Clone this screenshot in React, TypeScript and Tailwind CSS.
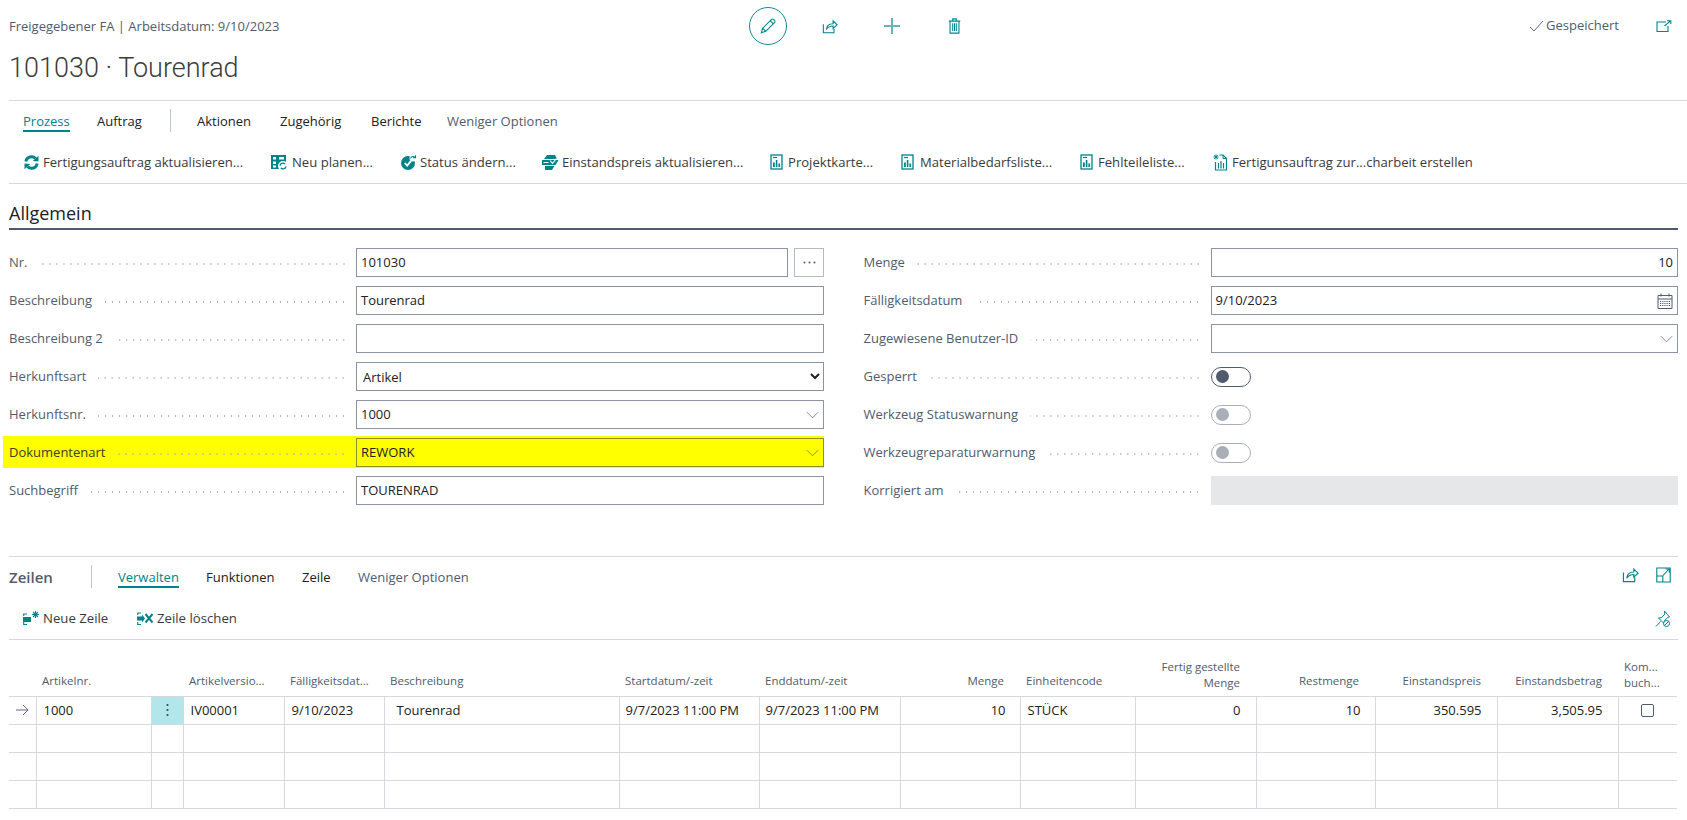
import React from 'react';

const TEAL = '#00838a';

const Refresh = () => (
  <svg width="15" height="15" viewBox="0 0 15 15" fill="none">
    <path d="M1.800 6.500C2.400 3.500 4.700 1.700 7.500 1.700c1.700 0 3 .6 4 1.700" stroke={TEAL} strokeWidth="3" />
    <path d="M8.800 6 14.500 6.600V.8z" fill={TEAL} />
    <path d="M13.200 8.500c-.6 3-2.900 4.800-5.700 4.800-1.700 0-3-.6-4-1.700" stroke={TEAL} strokeWidth="3" />
    <path d="M6.200 9 .5 8.400v5.800z" fill={TEAL} />
  </svg>
);

const Replan = () => (
  <svg width="17" height="15" viewBox="0 0 17 15">
    <rect x="0" y="0" width="15" height="14" fill={TEAL} />
    <path d="M2 2h3v2.500H2zM8 2h5v2.500H8zM2 6.500h3V9H2zM2 10.500h3V12.500H2z" fill="#fff" />
    <circle cx="12" cy="11" r="5" fill="#fff" />
    <path d="M9 10.500a3 3 0 0 1 5.200-1.400M15 11.500a3 3 0 0 1-5.200 1.400" stroke={TEAL} strokeWidth="1.300" fill="none" />
  </svg>
);

const StatusIcon = () => (
  <svg width="16" height="15" viewBox="0 0 16 15">
    <circle cx="7" cy="8" r="7" fill={TEAL} />
    <path d="M3.800 8l2.400 2.600 4-5" stroke="#fff" strokeWidth="1.800" fill="none" />
    <circle cx="12" cy="3" r="3.500" fill="#fff" />
    <path d="M9.500 3.400C10 1.600 12 1 14 2.200M14.500.3v2.400h-2.400" stroke={TEAL} strokeWidth="1.100" fill="none" />
  </svg>
);

const PriceIcon = () => (
  <svg width="17" height="15" viewBox="0 0 17 15">
    <path d="M5 0h8l2 4H2z" fill={TEAL} />
    <path d="M0 5h16.500l-3 5H0z" fill={TEAL} />
    <path d="M3 11h9.500l-2.500 4H3z" fill={TEAL} />
    <path d="M1.500 7.500h5M8 5.500l2.500 2.800 4-4.800" stroke="#fff" strokeWidth="1.100" fill="none" />
  </svg>
);

const ReportIcon = () => (
  <svg width="13" height="16" viewBox="0 0 13 16" fill="none">
    <rect x="1" y="1" width="11" height="14" stroke={TEAL} strokeWidth="1.300" />
    <path d="M3 3.500h4" stroke={TEAL} strokeWidth="1.200" />
    <path d="M3 13V8.500h1.800V13zM5.800 13V6h1.600v7zM8.400 13V9.500h1.700V13z" fill={TEAL} />
  </svg>
);

const NewDocIcon = () => (
  <svg width="15" height="17" viewBox="0 0 15 17" fill="none">
    <path d="M6.500 1H10l3.500 3.500V16H2.500V8" stroke={TEAL} strokeWidth="1.200" />
    <path d="M10 1v3.500h3.500" stroke={TEAL} strokeWidth="1" />
    <path d="M5.500 9v5.500M8 7v7.500M10.500 9v5.500" stroke={TEAL} strokeWidth="1.200" />
    <path d="M3 .5v5M.5 3h5M1.200 1.200l3.600 3.600M4.800 1.200 1.200 4.800" stroke={TEAL} strokeWidth="1" />
  </svg>
);

const ShareIcon = ({ size = 16 }: { size?: number }) => (
  <svg width={size} height={size} viewBox="0 0 18 18" fill="none" stroke={TEAL} strokeWidth="1.200">
    <path d="M1.500 7v9.500h12V12" />
    <path d="M5 13c.3-4 3-6.600 7.500-6.600V3.200L17 7.600l-4.500 4.300V9C9 9 6.500 10.500 5 13z" />
  </svg>
);

const PencilIcon = () => (
  <svg width="16" height="16" viewBox="0 0 18 18" fill="none" stroke={TEAL} strokeWidth="1.200">
    <path d="M1.500 16.500 3 11.500 12.800 1.700c.7-.7 1.700-.7 2.400 0l1.100 1.100c.7.7.7 1.700 0 2.400L6.500 15z" />
    <path d="M3 11.500 6.500 15M11.500 3l3.500 3.500" />
  </svg>
);

const TrashIcon = () => (
  <svg width="13" height="16" viewBox="0 0 14 18" fill="none" stroke={TEAL} strokeWidth="1.200">
    <path d="M.5 3.500h13M5 3.500V1h4v2.500M2 3.500V17h10V3.500" />
    <path d="M5 6v8.500M7 6v8.500M9 6v8.500" />
  </svg>
);

const OpenIcon = () => (
  <svg width="16" height="12" viewBox="0 0 16 12" fill="none" stroke={TEAL} strokeWidth="1.100">
    <path d="M10 2H1v9.500h11V6" />
    <path d="M8.500 6 14.500.8M11 .8h3.800V4" />
  </svg>
);

const ExpandIcon = () => (
  <svg width="15" height="16" viewBox="0 0 15 16" fill="none" stroke={TEAL} strokeWidth="1.100">
    <path d="M.8 1h13.400v14H.8z" />
    <path d="M.8 9h6v6M7 8.500l6-6.500M9.500 2h3.800v3.800" />
  </svg>
);

const PinIcon = () => (
  <svg width="16" height="18" viewBox="0 0 16 18" fill="none" stroke={TEAL} strokeWidth="1">
    <path d="M9.500 1 14.500 7l-1.800.4-3.200 3.300-.3 3L3.500 8l3-.4 3.300-3.400z" />
    <path d="M5.500 11.500 1 16.500" />
    <circle cx="11.500" cy="13.500" r="3" fill="#fff" />
    <path d="m9.500 15.500 4-4" />
  </svg>
);

const NewLineIcon = () => (
  <svg width="17" height="15" viewBox="0 0 17 15" fill="none">
    <path d="M4 3H.7v2M.7 11v2.500H4" stroke={TEAL} strokeWidth="1.100" />
    <rect x="0" y="6" width="8" height="5" fill={TEAL} />
    <path d="M12.500 0v7M9 3.500h7M10 1l5 5M15 1l-5 5" stroke={TEAL} strokeWidth="1.100" />
  </svg>
);

const DeleteLineIcon = () => (
  <svg width="17" height="15" viewBox="0 0 17 15" fill="none">
    <path d="M4 2H.7v2M.7 11v2.500H4" stroke={TEAL} strokeWidth="1.100" />
    <path d="M0 5.500h5V3.500l3 4-3 4v-2H0z" fill={TEAL} />
    <path d="m8.500 3 7 8.500M15.500 3l-7 8.500" stroke={TEAL} strokeWidth="2" />
  </svg>
);

const Chevron = () => (
  <svg width="13" height="8" viewBox="0 0 14 8" fill="none" stroke="#6b7686" strokeWidth="0.9">
    <path d="M1 1l6 6 6-6" />
  </svg>
);

const CalendarIcon = () => (
  <svg width="16" height="16" viewBox="0 0 16 16" fill="none" stroke="#505c6d" strokeWidth="1">
    <path d="M1 2.500h14v13H1zM1 6h14M4 .5v3M12 .5v3" />
    <path d="M3 8.500h10M3 10.500h10M3 12.500h10" strokeDasharray="1.200 1" />
  </svg>
);

const topTabs = [
  { label: 'Prozess', w: 'w-[74px]', active: true },
  { label: 'Auftrag', w: 'w-[73px]' },
];
const moreTabs = [
  { label: 'Aktionen', w: 'w-[83px]' },
  { label: 'Zugehörig', w: 'w-[91px]' },
  { label: 'Berichte', w: 'w-[76px]' },
  { label: 'Weniger Optionen', w: 'w-[120px]', muted: true },
];

const Tab = ({ label, w, active, muted }: { label: string; w: string; active?: boolean; muted?: boolean }) => (
  <div className={`${w} flex shrink-0 items-start pt-[12px]`}>
    <span
      className={`whitespace-nowrap text-[13px] leading-[17px] border-b-2 ${
        active ? 'text-[#00838a] border-[#00838a]' : muted ? 'text-[#505c6d] border-transparent' : 'text-[#212121] border-transparent'
      }`}
    >
      {label}
    </span>
  </div>
);

const actions = [
  { label: 'Fertigungsauftrag aktualisieren...', w: 'w-[247px]', box: 'w-[19px]', icon: <Refresh /> },
  { label: 'Neu planen...', w: 'w-[130px]', box: 'w-[21px]', icon: <Replan /> },
  { label: 'Status ändern...', w: 'w-[141px]', box: 'w-[19px]', icon: <StatusIcon /> },
  { label: 'Einstandspreis aktualisieren...', w: 'w-[228px]', box: 'w-[20px]', icon: <PriceIcon /> },
  { label: 'Projektkarte...', w: 'w-[131px]', box: 'w-[18px]', icon: <ReportIcon /> },
  { label: 'Materialbedarfsliste...', w: 'w-[179px]', box: 'w-[19px]', icon: <ReportIcon /> },
  { label: 'Fehlteileliste...', w: 'w-[133px]', box: 'w-[18px]', icon: <ReportIcon /> },
  { label: 'Fertigunsauftrag zur...charbeit erstellen', w: 'w-[260px]', box: 'w-[19px]', icon: <NewDocIcon /> },
];

const Leader = () => (
  <div className="h-[2px] flex-1 ml-[12px] mt-[2px] bg-[radial-gradient(circle,#adb2bb_0.7px,transparent_0.9px)] bg-[length:7px_2px] bg-repeat-x bg-right" />
);

const Field = ({ label, children, highlight }: { label: string; children: React.ReactNode; highlight?: boolean }) => (
  <div
    className={`flex items-center ${
      highlight ? 'bg-[#ffff00] ml-[-6px] pl-[6px] mt-[-2px] mb-[-1px] pt-[2px] pb-[1px]' : ''
    }`}
  >
    <div className="flex w-[338px] shrink-0 items-center mr-[9px]">
      <span className={`text-[13px] whitespace-nowrap ${highlight ? 'text-[#3c3c28]' : 'text-[#505c6d]'}`}>{label}</span>
      <Leader />
    </div>
    <div className="flex-1 min-w-0">{children}</div>
  </div>
);

const Box = ({
  children,
  right,
  highlight,
  className = '',
}: {
  children?: React.ReactNode;
  right?: boolean;
  highlight?: boolean;
  className?: string;
}) => (
  <div
    className={`flex h-[29px] items-center border px-[4px] text-[13px] text-[#212121] ${
      highlight ? 'border-[#8f8f2a]' : 'border-[#8a94a4] bg-white'
    } ${right ? 'justify-end' : 'justify-between'} ${className}`}
  >
    {children}
  </div>
);

const Toggle = ({ disabled }: { disabled?: boolean }) => (
  <div
    className={`flex h-[20px] w-[40px] items-center rounded-[10px] border pl-[4px] ${
      disabled ? 'border-[#a9aeb8]' : 'border-[#505c6d]'
    }`}
  >
    <div className={`h-[13px] w-[13px] rounded-full ${disabled ? 'bg-[#a9aeb8]' : 'bg-[#505c6d]'}`} />
  </div>
);

const columns = [
  { label: '', w: 'w-[27px]' },
  { label: 'Artikelnr.', w: 'w-[115px]' },
  { label: '', w: 'w-[32px]' },
  { label: 'Artikelversio...', w: 'w-[101px]' },
  { label: 'Fälligkeitsdat...', w: 'w-[100px]' },
  { label: 'Beschreibung', w: 'w-[235px]' },
  { label: 'Startdatum/-zeit', w: 'w-[140px]' },
  { label: 'Enddatum/-zeit', w: 'w-[141px]' },
  { label: 'Menge', w: 'w-[120px]', right: true },
  { label: 'Einheitencode', w: 'w-[115px]' },
  { label: 'Fertig gestellte', label2: 'Menge', w: 'w-[121px]', right: true },
  { label: 'Restmenge', w: 'w-[119px]', right: true },
  { label: 'Einstandspreis', w: 'w-[122px]', right: true },
  { label: 'Einstandsbetrag', w: 'w-[121px]', right: true },
  { label: 'Kom...', label2: 'buch...', w: 'w-[59px]' },
];

const rowCell = 'h-[28px] border-b border-l first:border-l-0 border-[#d5d8dd] p-0 text-[13px] text-[#212121] whitespace-nowrap';
const textCell = `${rowCell} pt-[2px]`;

export default function App() {
  return (
    <div className="h-[820px] w-full overflow-hidden bg-white font-['Open_Sans',sans-serif]">
      {/* page header */}
      <div className="flex h-[100px] pl-[9px]">
        <div className="w-[740px] shrink-0">
          <div className="pt-[17px] text-[13px] leading-[18px] text-[#505c6d]">Freigegebener FA | Arbeitsdatum: 9/10/2023</div>
          <div className="pt-[15px] font-['Roboto',sans-serif] text-[27px] font-light leading-[36px] text-[#3c3c3c]">101030 · Tourenrad</div>
        </div>
        <div className="flex h-[38px] mt-[7px] items-center">
          <div className="flex h-[38px] w-[38px] items-center justify-center rounded-full border border-[#108a94]">
            <PencilIcon />
          </div>
          <div className="ml-[12px] flex w-[62px] justify-center"><ShareIcon /></div>
          <div className="flex w-[62px] justify-center">
            <svg width="16" height="16" viewBox="0 0 16 16" stroke="#66b4b8" strokeWidth="2"><path d="M8 0v16M0 8h16" /></svg>
          </div>
          <div className="flex w-[62px] justify-center"><TrashIcon /></div>
        </div>
        <div className="ml-auto flex h-[52px] items-center pr-[15px]">
          <svg width="16" height="12" viewBox="0 0 16 12" fill="none" stroke="#505c6d" strokeWidth="0.9"><path d="M1 7l4 4L14 1" /></svg>
          <span className="ml-[1px] text-[13px] text-[#505c6d]">Gespeichert</span>
          <div className="ml-[37px]"><OpenIcon /></div>
        </div>
      </div>

      {/* action bar */}
      <div className="ml-[9px] border-t border-[#d5d8dd]">
        <div className="flex h-[40px] pl-[14px]">
          {topTabs.map((t) => <Tab key={t.label} {...t} />)}
          <div className="mt-[8px] mr-[26px] h-[23px] w-px bg-[#c0c4cb]" />
          {moreTabs.map((t) => <Tab key={t.label} {...t} />)}
        </div>
        <div className="flex h-[43px] items-center border-b border-[#d5d8dd] pl-[15px] pt-[1px]">
          {actions.map((a) => (
            <div key={a.label} className={`${a.w} flex shrink-0 items-center`}>
              <div className={`${a.box} shrink-0`}>{a.icon}</div>
              <span className="whitespace-nowrap text-[13.1px] text-[#3a3a3a]">{a.label}</span>
            </div>
          ))}
        </div>
      </div>

      {/* Allgemein */}
      <div className="ml-[9px] mr-[9px] flex h-[46px] items-end border-b-2 border-[#505a6e] pb-[4px]">
        <span className="text-[18px] leading-[22px] text-[#212121]">Allgemein</span>
      </div>

      <div className="grid grid-cols-[815px_814.5px] gap-x-[39.5px] gap-y-[9px] pl-[9px] pt-[18px]">
        <Field label="Nr.">
          <div className="flex gap-[6px]">
            <Box className="flex-1">101030</Box>
            <div className="flex h-[29px] w-[30px] items-center justify-center border border-[#b5bac3] text-[#505c6d]">
              <svg width="13" height="3" viewBox="0 0 13 3" fill="#505c6d"><circle cx="1.500" cy="1.500" r="1" /><circle cx="6.500" cy="1.500" r="1" /><circle cx="11.500" cy="1.500" r="1" /></svg>
            </div>
          </div>
        </Field>
        <Field label="Menge"><Box right>10</Box></Field>

        <Field label="Beschreibung"><Box>Tourenrad</Box></Field>
        <Field label="Fälligkeitsdatum"><Box>9/10/2023<CalendarIcon /></Box></Field>

        <Field label="Beschreibung 2"><Box /></Field>
        <Field label="Zugewiesene Benutzer-ID"><Box className="justify-end"><span /><Chevron /></Box></Field>

        <Field label="Herkunftsart">
          <select className="h-[29px] w-full border border-[#8a94a4] bg-white pl-[2px] text-[13px] text-[#212121]" defaultValue="Artikel">
            <option>Artikel</option>
          </select>
        </Field>
        <Field label="Gesperrt"><Toggle /></Field>

        <Field label="Herkunftsnr."><Box>1000<Chevron /></Box></Field>
        <Field label="Werkzeug Statuswarnung"><Toggle disabled /></Field>

        <Field label="Dokumentenart" highlight><Box highlight>REWORK<Chevron /></Box></Field>
        <Field label="Werkzeugreparaturwarnung"><Toggle disabled /></Field>

        <Field label="Suchbegriff"><Box>TOURENRAD</Box></Field>
        <Field label="Korrigiert am"><div className="h-[29px] bg-[#e5e7e9]" /></Field>
      </div>

      {/* Zeilen */}
      <div className="ml-[9px] mr-[9px] mt-[51px] border-t border-[#d5d8dd]">
        <div className="flex h-[40px]">
          <div className="w-[82px] pt-[10px] text-[15px] font-semibold leading-[20px] text-[#505c6d]">Zeilen</div>
          <div className="mt-[8px] mr-[26px] h-[23px] w-px bg-[#c0c4cb]" />
          <Tab label="Verwalten" w="w-[88px]" active />
          <Tab label="Funktionen" w="w-[96px]" />
          <Tab label="Zeile" w="w-[56px]" />
          <Tab label="Weniger Optionen" w="w-[120px]" muted />
          <div className="ml-auto flex items-start pt-[9px] pr-[7px]">
            <ShareIcon size={17} />
            <div className="ml-[17px] mt-[1px]"><ExpandIcon /></div>
          </div>
        </div>
        <div className="flex h-[43px] items-center border-b border-[#d5d8dd] pl-[14px] pt-[1px]">
          <div className="flex w-[114px] items-center">
            <div className="w-[20px]"><NewLineIcon /></div>
            <span className="text-[13.2px] text-[#3a3a3a]">Neue Zeile</span>
          </div>
          <div className="flex items-center">
            <div className="w-[20px]"><DeleteLineIcon /></div>
            <span className="text-[13.2px] text-[#3a3a3a]">Zeile löschen</span>
          </div>
          <div className="ml-auto pr-[7px]"><PinIcon /></div>
        </div>

        <table className="w-[1668px] table-fixed border-collapse">
          <colgroup>
            {columns.map((c, i) => <col key={i} className={c.w} />)}
          </colgroup>
          <thead>
            <tr className="h-[56px]">
              {columns.map((c, i) => (
                <th
                  key={i}
                  className={`border-b border-[#d5d8dd] align-bottom text-[11.5px] font-normal leading-[16px] text-[#505c6d] whitespace-nowrap ${
                    c.right ? 'text-right pr-[16px]' : 'text-left pl-[6px]'
                  } ${c.label2 ? 'pb-[5px]' : 'pb-[7px]'}`}
                >
                  {c.label}
                  {c.label2 && <div>{c.label2}</div>}
                </th>
              ))}
            </tr>
          </thead>
          <tbody>
            <tr>
              <td className={rowCell}>
                <div className="flex justify-center">
                  <svg width="14" height="12" viewBox="0 0 14 12" fill="none" stroke="#505c6d" strokeWidth="0.9"><path d="M1 6h12M8 1l5 5-5 5" /></svg>
                </div>
              </td>
              <td className={`${textCell} pl-[7px]`}>1000</td>
              <td className={`${rowCell} bg-[#b2e6ea]`}>
                <div className="flex justify-center">
                  <svg width="3" height="14" viewBox="0 0 3 14" fill="#0b5a60"><circle cx="1.500" cy="2" r="1.100" /><circle cx="1.500" cy="7" r="1.100" /><circle cx="1.500" cy="12" r="1.100" /></svg>
                </div>
              </td>
              <td className={`${textCell} pl-[7px]`}>IV00001</td>
              <td className={`${textCell} pl-[7px]`}>9/10/2023</td>
              <td className={`${textCell} pl-[12px]`}>Tourenrad</td>
              <td className={`${textCell} pl-[6px]`}>9/7/2023 11:00 PM</td>
              <td className={`${textCell} pl-[6px]`}>9/7/2023 11:00 PM</td>
              <td className={`${textCell} pr-[14px] text-right`}>10</td>
              <td className={`${textCell} pl-[7px]`}>STÜCK</td>
              <td className={`${textCell} pr-[15px] text-right`}>0</td>
              <td className={`${textCell} pr-[14px] text-right`}>10</td>
              <td className={`${textCell} pr-[15px] text-right`}>350.595</td>
              <td className={`${textCell} pr-[15px] text-right`}>3,505.95</td>
              <td className={rowCell}>
                <div className="flex justify-center">
                  <div className="h-[13px] w-[13px] rounded-[2px] border border-[#505c6d]" />
                </div>
              </td>
            </tr>
            {[1, 2, 3].map((r) => (
              <tr key={r}>
                {columns.map((c, i) => <td key={i} className={rowCell} />)}
              </tr>
            ))}
          </tbody>
        </table>
      </div>
    </div>
  );
}
